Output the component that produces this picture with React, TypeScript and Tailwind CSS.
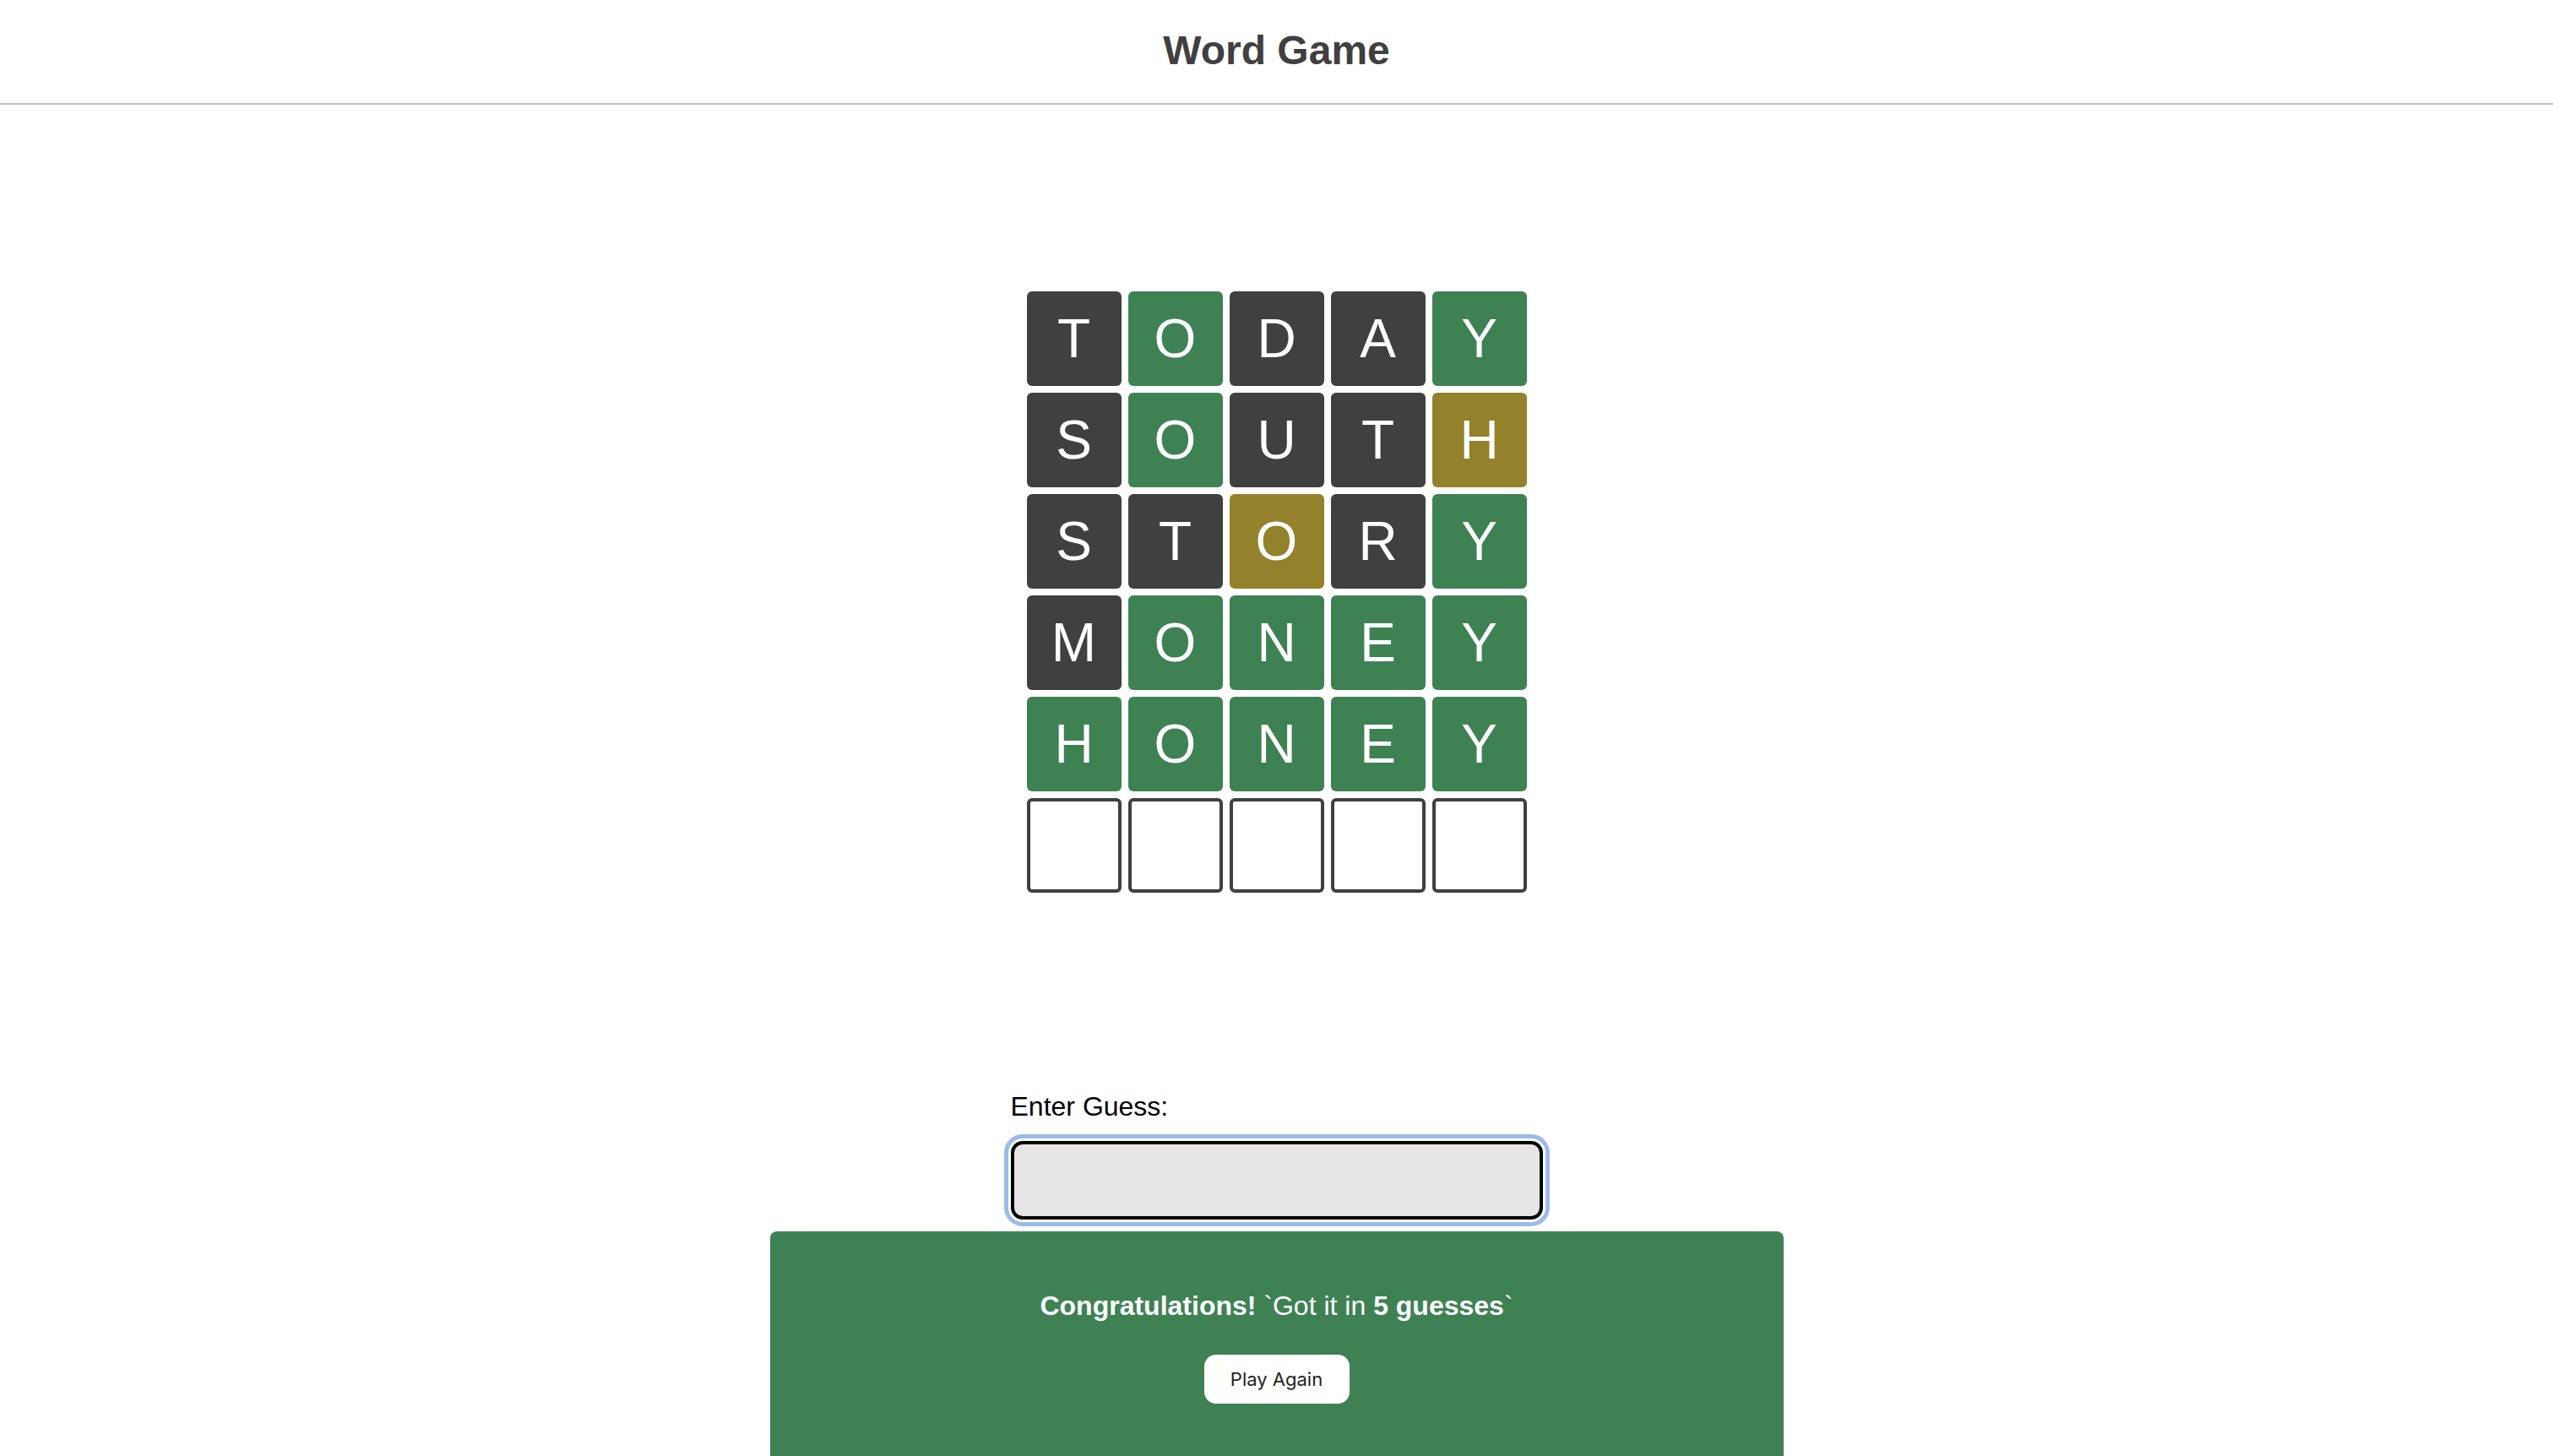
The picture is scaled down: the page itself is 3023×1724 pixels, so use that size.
import React from "react";

type Mark = "absent" | "correct" | "present";

const guesses: { word: string; marks: Mark[] }[] = [
  { word: "TODAY", marks: ["absent", "correct", "absent", "absent", "correct"] },
  { word: "SOUTH", marks: ["absent", "correct", "absent", "absent", "present"] },
  { word: "STORY", marks: ["absent", "absent", "present", "absent", "correct"] },
  { word: "MONEY", marks: ["absent", "correct", "correct", "correct", "correct"] },
  { word: "HONEY", marks: ["correct", "correct", "correct", "correct", "correct"] },
];

const markClass: Record<Mark, string> = {
  absent: "bg-[#404040]",
  correct: "bg-[#3e8254]",
  present: "bg-[#94812b]",
};

function Tile({ letter, mark }: { letter?: string; mark?: Mark }) {
  if (!letter || !mark) {
    return <div className="w-[112px] h-[112px] rounded-[6px] border-[4px] border-[#404040] bg-white" />;
  }
  return (
    <div
      className={`w-[112px] h-[112px] rounded-[6px] flex items-center justify-center text-white text-[64px] leading-none ${markClass[mark]}`}
    >
      {letter}
    </div>
  );
}

export default function App() {
  return (
    <div className="min-h-screen bg-white font-['Liberation_Sans',Arial,sans-serif] overflow-hidden">
      <header className="h-[124px] pb-[2px] flex items-center justify-center border-b-2 border-[#c4c4c4]">
        <h1 className="text-[48px] font-bold text-[#404040]">Word Game</h1>
      </header>

      <main className="flex flex-col items-center pt-[221px]">
        <div className="flex flex-col gap-[8px]">
          {guesses.map((g, r) => (
            <div key={r} className="flex gap-[8px]">
              {g.word.split("").map((ch, i) => (
                <Tile key={i} letter={ch} mark={g.marks[i]} />
              ))}
            </div>
          ))}
          <div className="flex gap-[8px]">
            {[0, 1, 2, 3, 4].map((i) => (
              <Tile key={i} />
            ))}
          </div>
        </div>

        <div className="w-[630px] mt-[233px] flex flex-col gap-[21px]">
          <label htmlFor="guess" className="text-[32px] leading-[40px] text-black">
            Enter Guess:
          </label>
          <input
            id="guess"
            type="text"
            autoFocus
            className="w-full h-[93px] rounded-[14px] border-[4px] border-black bg-[#e5e5e5] outline-[5px] outline-solid outline-offset-[3px] outline-[#9bbbeb] px-4 text-[32px]"
          />
        </div>

        <section className="w-[1200px] mt-[14px] rounded-t-[8px] bg-[#3e8254] flex flex-col items-center pt-[68px] pb-[80px]">
          <p className="text-[32px] leading-[40px] text-white">
            <span className="font-bold">Congratulations!</span> `Got it in{" "}
            <span className="font-bold">5 guesses</span>`
          </p>
          <button
            type="button"
            className="mt-[38px] w-[172px] h-[58px] rounded-[14px] bg-white text-[#222] text-[22px] font-['Inter',sans-serif]"
          >
            Play Again
          </button>
        </section>
      </main>
    </div>
  );
}
